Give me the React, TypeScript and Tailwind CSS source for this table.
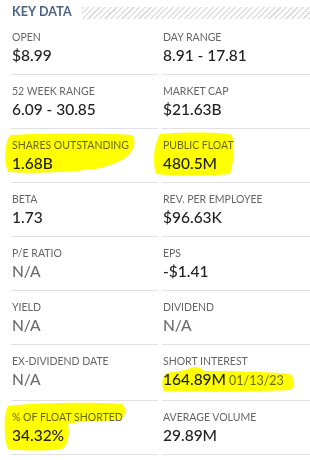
import React from 'react';

type Item = {
    label: string;
    value: string;
    muted?: boolean;
    note?: string;
};

const items: Item[] = [
    { label: 'Open', value: '$8.99' },
    { label: 'Day Range', value: '8.91 - 17.81' },
    { label: '52 Week Range', value: '6.09 - 30.85' },
    { label: 'Market Cap', value: '$21.63B' },
    { label: 'Shares Outstanding', value: '1.68B' },
    { label: 'Public Float', value: '480.5M' },
    { label: 'Beta', value: '1.73' },
    { label: 'Rev. per Employee', value: '$96.63K' },
    { label: 'P/E Ratio', value: 'N/A', muted: true },
    { label: 'EPS', value: '-$1.41' },
    { label: 'Yield', value: 'N/A', muted: true },
    { label: 'Dividend', value: 'N/A', muted: true },
    { label: 'Ex-Dividend Date', value: 'N/A', muted: true },
    { label: 'Short Interest', value: '164.89M', note: '01/13/23' },
    { label: '% of Float Shorted', value: '34.32%' },
    { label: 'Average Volume', value: '29.89M' },
];

// marker strokes drawn over the page (page coordinates)
const marks = [
    'M 10 135 C 50 133 110 133 132 135 C 136 140 135 148 130 153 C 126 160 110 166 95 169 C 70 172 30 174 8 172 C 4 160 4 145 10 135 Z',
    'M 160 134 C 190 132 220 132 232 135 C 235 150 233 165 230 174 C 205 176 175 176 156 174 C 152 160 154 145 160 134 Z',
    'M 166 373 C 175 372 183 371 188 369 C 193 366 200 366 204 371 C 240 371 270 372 290 374 C 295 378 295 386 291 390 C 250 392 200 392 164 391 C 161 385 162 377 166 373 Z',
    'M 8 406 C 40 402 100 402 122 404 C 127 408 126 416 120 420 C 100 421 80 421 68 424 C 70 435 68 445 62 449 C 45 451 25 451 8 449 C 4 440 3 415 8 406 Z',
];

function Cell({ item }: { item: Item }) {
    return (
        <div className="border-b border-[#e1e1e1] pl-[1px] pt-[9px] pb-[9px]">
            <div className="text-[10.5px] leading-[14px] uppercase text-[#666666]">{item.label}</div>
            <div className="mt-[1px] flex items-baseline gap-[3px] leading-[20px]">
                <span className={`text-[15.5px] font-medium ${item.muted ? 'text-[#6c6c6c]' : 'text-[#222222]'}`}>
                    {item.value}
                </span>
                {item.note && <span className="text-[12.5px] text-[#6a6a6a]">{item.note}</span>}
            </div>
        </div>
    );
}

export default function App() {
    return (
        <div className="relative w-[310px] h-[460px] overflow-hidden bg-white font-['Lato','Liberation_Sans',sans-serif]">
            <header className="flex h-[21px] items-center gap-[10px] pl-[12px] pt-[4px]">
                <h2 className="text-[12.5px] font-bold leading-none tracking-[0.01em] text-[#4a6487]">KEY DATA</h2>
                <div className="h-[12px] flex-1 bg-[repeating-linear-gradient(135deg,#e0e0e0_0px,#e0e0e0_1.5px,transparent_1.5px,transparent_4px)]" />
            </header>

            <div className="grid grid-cols-[147px_1fr] gap-x-[4px] pl-[11px]">
                {items.map((item) => (
                    <Cell key={item.label} item={item} />
                ))}
            </div>

            <svg
                className="pointer-events-none absolute inset-0 mix-blend-multiply"
                width="310"
                height="460"
                viewBox="0 0 310 460"
            >
                {marks.map((d, i) => (
                    <path key={i} d={d} fill="#ffff00" />
                ))}
            </svg>
        </div>
    );
}
